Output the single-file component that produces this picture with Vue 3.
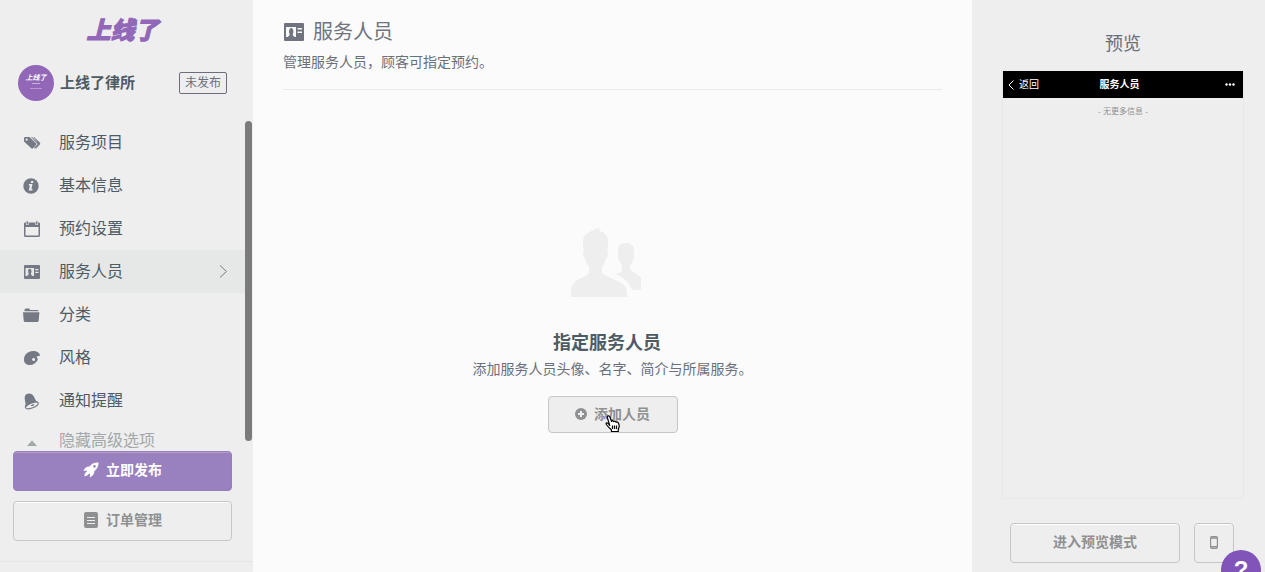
<script setup>
const items = [
  { label: '服务项目', icon: 'tags' },
  { label: '基本信息', icon: 'info' },
  { label: '预约设置', icon: 'calendar' },
  { label: '服务人员', icon: 'card', active: true },
  { label: '分类', icon: 'folder' },
  { label: '风格', icon: 'palette' },
  { label: '通知提醒', icon: 'bell' },
]
</script>

<template>
  <div class="app">
    <aside class="sidebar">
      <div class="logo">上线了</div>
      <div class="profile">
        <div class="avatar"><b>上线了</b><i></i><i class="wide"></i></div>
        <span class="name">上线了律所</span>
        <span class="status">未发布</span>
      </div>
      <div class="scroll">
        <nav class="menu">
          <a v-for="item in items" :key="item.label" href="#" class="item" :class="{ active: item.active }">
            <svg class="icon" width="18" height="18" viewBox="0 0 18 18" fill="currentColor" aria-hidden="true">
              <path v-if="item.icon === 'tags'" fill-rule="evenodd" d="M1 4.2Q1 3 2.2 3H6.5L13 9.3Q13.8 10.1 13 11L10 14.3Q9.2 15 8.3 14.2L1 7.5ZM3.6 4.5A1.1 1.1 0 1 0 3.7 6.7 1.1 1.1 0 0 0 3.6 4.5ZM8 3H9L15.7 9.2Q16.4 9.8 15.7 10.6L12 14.7 11 14.1 14.6 10ZM10.2 3H11.1L17 8.8Q17.6 9.6 16.9 10.4L13.4 14.6 12.8 14.2 16.3 9.9Z" />
              <template v-else-if="item.icon === 'info'">
                <circle cx="8" cy="9" r="7.7" />
                <path fill="#eee" d="M8.2 4.1h2.2l-.4 2H7.8zM6 7h3.5l-1.1 5h1.2l-.3 1.4H5.8l1.1-5H5.7z" />
              </template>
              <path v-else-if="item.icon === 'calendar'" fill-rule="evenodd" d="M1 3.5Q1 2.5 2 2.5H3V5H5.5V2.5H12.5V5H15V2.5H16Q17 2.5 17 3.5V15.5Q17 17 15.5 17H2.5Q1 17 1 15.5ZM2.5 7V15.5H15.5V7ZM3.6 1H4.9V4.4H3.6ZM13.1 1H14.4V4.4H13.1Z" />
              <template v-else-if="item.icon === 'card'">
                <rect x="1" y="2" width="16" height="14" rx="1" />
                <path fill="#e6e8e7" d="M2.5 5H11V13H9.5L8 11.5V10.5Q8.7 9 8.4 7.2 8 5.8 6.8 5.8T5.2 7.2Q4.9 9 5.6 10.5V11.5L4 13H2.5ZM12.2 6H15.5V7.2H12.2ZM12.2 8.7H15.5V10H12.2Z" />
              </template>
              <path v-else-if="item.icon === 'folder'" d="M1.5 4Q1.5 2.5 3 2.5H6.2L7.2 4H14.5Q15.5 4 15.5 5.3H1.5ZM0 6.2H16.4L15.7 14.5Q15.6 16 14.2 16H2.2Q.8 16 .7 14.5Z" />
              <path v-else-if="item.icon === 'palette'" fill-rule="evenodd" d="M1 11C.8 5.5 5 2 10 2c3.8 0 7 2 7 4.8-1.3.7-3 .1-3.4 1 .5 1.3 1.8 1.8.8 3.7C12.8 14.2 10 16 7 16c-3.6 0-5.8-1.8-6-5zM10.5 9a1.5 1.5 0 1 0 .1 3 1.5 1.5 0 0 0-.1-3z" />
              <template v-else>
                <path d="M2 4C3.5 1 8 .6 10.5 4c2 2.8 1.3 4.8 4.7 6.2-4 .1-9.5 1.8-12.8 5.2C3.5 11 .8 7.2 2 4z" />
                <ellipse cx="8.8" cy="13.2" rx="6.7" ry="2.7" transform="rotate(-21 8.8 13.2)" fill="none" stroke="currentColor" stroke-width="1.2" />
                <path d="M7.4 13.5q2.2-1.7 4-1.2-.4 2.8-4 1.2z" />
              </template>
            </svg>
            <span>{{ item.label }}</span>
            <svg v-if="item.active" class="arrow" width="9" height="14" viewBox="0 0 9 14" fill="none" stroke="currentColor" aria-hidden="true"><path d="M1 .5l6.5 6L1 12.5" /></svg>
          </a>
          <a href="#" class="item collapse">
            <svg class="icon" width="18" height="18" viewBox="0 0 18 18" fill="currentColor" aria-hidden="true"><path d="M4 14 9 8.5 14 14z" /></svg>
            <span>隐藏高级选项</span>
          </a>
        </nav>
        <div class="thumb"></div>
      </div>
      <div class="actions">
        <button class="btn primary">
          <svg width="16" height="16" viewBox="0 0 16 16" fill="currentColor" aria-hidden="true"><path fill-rule="evenodd" d="M15.5.5C11 .3 8.4 2 6.4 4.5 3.8 4.3 1.5 6 .4 9L3.3 8.5 4 9.4C2.3 10 1.6 12 1.3 14.3 3.8 14 5.4 13 6.2 11.5L7.1 12.2 6.8 15.4C9.7 14 11.6 12 11.3 9.3 14 7.2 15.7 4.5 15.5.5ZM11.5 3.1A1.3 1.3 0 1 1 11.4 5.7 1.3 1.3 0 0 1 11.5 3.1Z" /></svg>
          立即发布
        </button>
        <button class="btn">
          <svg width="16" height="16" viewBox="0 0 16 16" aria-hidden="true"><rect x="1" width="14" height="16" rx="2" fill="currentColor" /><path d="M4 5.5h8M4 8.5h8M4 11.5h8" stroke="#eee" /></svg>
          订单管理
        </button>
      </div>
    </aside>

    <main class="main">
      <header class="head">
        <h1>
          <svg width="20" height="18" viewBox="0 0 20 18" aria-hidden="true">
            <rect width="20" height="18" rx="1" fill="currentColor" />
            <path fill="#fbfbfb" d="M2 4H12V14H10.6L8.8 12.3V11Q9.7 9.5 9.3 7.4 8.7 5 7.2 5T5.1 7.4Q4.7 9.5 5.6 11V12.3L3.8 14H2ZM13.5 5H18V6.4H13.5ZM13.5 8.5H18V10H13.5Z" />
          </svg>
          服务人员
        </h1>
        <p>管理服务人员，顾客可指定预约。</p>
      </header>
      <section class="empty">
        <div class="intro">
          <svg width="72" height="72" viewBox="0 0 72 72" fill="#eee" aria-hidden="true">
            <path d="M0 70V63C0 58 4 54 8 52L16 48Q18 47 18 45V39C15 37 15 33 14 31Q12 30 12 26L13 23 12 20V14C12 8 17 6 21 3.500Q26 2 29 0L28 2Q29 5 32 5C36 8 37 11 37 15V20L36 23 37 26Q37 30 35 31C34 35 34 37 31 39V44Q31 47 34 48C40 52 47 53 52 57 55 60 56 63 56 67V70Z" />
            <path d="M44 47Q50 46 51 43V38C49 36 49 33 47 32V22C47 17 51 16 55 16S63 18 63 23V32C61 34 61 37 59 38V41C60 45 65 46 68 49L70 51V63H62L60 61C58 54 51 50 44 47Z" />
          </svg>
          <h2>指定服务人员</h2>
        </div>
        <p>添加服务人员头像、名字、简介与所属服务。</p>
        <button class="btn add">
          <svg width="12" height="12" viewBox="0 0 12 12" aria-hidden="true"><circle cx="6" cy="6" r="6" fill="currentColor" /><path d="M6 3v6M3 6h6" stroke="#eee" stroke-width="2" /></svg>
          添加人员
          <svg class="cursor" width="16" height="18" viewBox="0 0 16 18" fill="#fff" stroke="#000" stroke-width="1.2" stroke-linejoin="round" aria-hidden="true"><path d="M4.7 10.5 2.4 2.7Q2 1.2 3.2.9T4.9 2L6.6 6.5Q7 5.4 8 5.8L8.7 6.6Q9.6 5.7 10.6 6.5L11.2 7.3Q12 6.6 13 7.4 14.2 9 14.3 11.4L13.3 14V16.5H6.4V14.8Q4 13 1.4 9.5.6 8 1.8 7.8T4.7 10.5Z" /><path d="M7.5 10.5v3.5M9.5 10.5v3.5M11.5 10.5v3.5" /></svg>
        </button>
      </section>
    </main>

    <aside class="preview">
      <h2>预览</h2>
      <div class="phone">
        <div class="bar">
          <a href="#" class="back"><svg width="6" height="10" viewBox="0 0 6 10" fill="none" stroke="currentColor" aria-hidden="true"><path d="M5.5.5 1 5l4.500 4.500" /></svg>返回</a>
          <strong>服务人员</strong>
          <svg class="dots" width="10" height="3" viewBox="0 0 10 3" fill="#fff" aria-hidden="true"><circle cx="1.5" cy="1.5" r="1.2" /><circle cx="5" cy="1.5" r="1.2" /><circle cx="8.5" cy="1.5" r="1.2" /></svg>
        </div>
        <p>- 无更多信息 -</p>
      </div>
      <div class="modes">
        <button class="btn mode">进入预览模式</button>
        <button class="btn device" aria-label="手机预览">
          <svg width="8" height="13" viewBox="0 0 8 13" fill="none" stroke="currentColor" aria-hidden="true"><rect x=".6" y=".6" width="6.8" height="11.8" rx="1.2" stroke-width="1.2" /><path d="M1 2h6M1 10.8h6" stroke-width="1.4" /></svg>
        </button>
      </div>
    </aside>
    <button class="help">?</button>
  </div>
</template>

<style>
body {
  margin: 0;
  overflow: hidden;
}
</style>

<style scoped>
.app {
  display: flex;
  position: relative;
  height: 100vh;
  overflow: hidden;
  background: #eee;
  color: #6a6f7b;
  font-family: "Liberation Sans", "Noto Sans CJK SC", sans-serif;
  font-size: 14px;
  line-height: 20px;
}
* { box-sizing: border-box; }
a { color: inherit; text-decoration: none; }
h1, h2, p { margin: 0; }
svg { flex: none; }

.sidebar {
  display: flex;
  flex-direction: column;
  flex: none;
  width: 253px;
}
.logo {
  height: 65px;
  padding: 13px 8px 0 0;
  text-align: center;
  color: #9267b8;
  font-family: "Noto Sans CJK SC", sans-serif;
  font-size: 24px;
  line-height: 32px;
  font-weight: 900;
  font-style: italic;
  -webkit-text-stroke: 1px #9267b8;
}
.profile {
  display: flex;
  align-items: center;
  height: 36px;
  margin-bottom: 20px;
  padding: 0 26px 0 18px;
}
.avatar {
  display: flex;
  flex-direction: column;
  align-items: center;
  width: 36px;
  height: 36px;
  padding-top: 8px;
  border-radius: 50%;
  background: #9267b8;
  color: #fff;
}
.avatar b { font-size: 7px; line-height: 10px; font-style: italic; }
.avatar i { width: 8px; height: 1px; background: #c9b1da; }
.avatar .wide { width: 12px; margin-top: 4px; background: #b797ce; }
.name {
  margin-left: 6px;
  color: #4e5b64;
  font-size: 15px;
  font-weight: 700;
}
.status {
  margin-left: auto;
  padding: 0 5px;
  border: 1px solid #6a6f7b;
  border-radius: 2px;
  font-size: 12px;
}
.scroll {
  position: relative;
  flex: 1;
  min-height: 0;
  overflow: hidden;
}
.item {
  display: flex;
  align-items: center;
  height: 43px;
  margin-right: 8px;
  padding: 0 17px 0 23px;
  color: #4e5b64;
  font-size: 16px;
}
.item.active { background: #e6e8e7; }
.icon { margin-right: 18px; color: #747984; }
.arrow { margin-left: auto; color: #747984; }
.collapse { height: 37px; color: #a3a8ab; }
.collapse .icon { color: #a3a8ab; }
.thumb {
  position: absolute;
  top: 0;
  right: 1px;
  bottom: 10px;
  width: 7px;
  border-radius: 4px;
  background: #7b7b7b;
}
.actions {
  display: grid;
  gap: 10px;
  height: 111px;
  margin-bottom: 10px;
  padding: 0 21px 20px 13px;
  border-bottom: 1px solid #e5e5e5;
}
.btn {
  display: flex;
  align-items: center;
  justify-content: center;
  gap: 7px;
  height: 40px;
  padding: 0 0 4px;
  border: 1px solid #c6c6c6;
  border-radius: 4px;
  background: #eee;
  box-shadow: inset 0 1px #fff;
  color: #8e9091;
  font: 700 14px/20px "Noto Sans CJK SC", sans-serif;
}
.btn svg { margin-top: 2px; }
.primary {
  border-color: #967dbc;
  background: #9980be;
  box-shadow: inset 0 1px #b39dce;
  color: #fff;
}

.main {
  display: flex;
  flex-direction: column;
  flex: 1;
  min-width: 0;
  padding: 0 30px;
  background: #fbfbfb;
}
.head {
  height: 90px;
  padding-top: 18px;
  border-bottom: 1px solid #eaeaea;
}
.head h1 {
  display: flex;
  align-items: center;
  gap: 9px;
  margin-left: 1px;
  color: #6f747f;
  font-size: 20px;
  line-height: 28px;
  font-weight: 400;
}
.head p { margin-top: 6px; }
.empty {
  display: flex;
  flex-direction: column;
  flex: 1;
  align-items: center;
  justify-content: center;
  padding-bottom: 2px;
}
.intro {
  display: flex;
  flex-direction: column;
  align-items: center;
  padding-right: 11px;
}
.empty h2 {
  margin-top: 30px;
  color: #4e5b64;
  font-size: 18px;
  line-height: 28px;
  font-weight: 700;
}
.empty p { margin-top: 2px; }
.add {
  position: relative;
  width: 130px;
  height: 37px;
  margin-top: 17px;
  box-shadow: none;
}
.add .cursor { position: absolute; left: 56px; top: 18px; margin: 0; }

.preview {
  display: flex;
  flex-direction: column;
  flex: none;
  width: 293px;
  padding: 30px 21px 9px 30px;
}
.preview h2 {
  margin-bottom: 13px;
  text-align: center;
  font-size: 18px;
  line-height: 28px;
  font-weight: 400;
}
.phone {
  flex: 1;
  border: 1px solid #e8e8e8;
  border-top: 0;
  border-radius: 0 0 4px 4px;
}
.bar {
  display: grid;
  grid-template-columns: 1fr auto 1fr;
  align-items: center;
  height: 27px;
  padding: 0 8px 0 5px;
  background: #000;
  color: #fff;
  font-size: 10px;
}
.bar strong { padding-right: 4px; font-weight: 700; }
.back { display: flex; align-items: center; gap: 5px; }
.dots { justify-self: end; }
.phone p {
  margin-top: 4px;
  text-align: center;
  color: #8e9091;
  font-size: 8px;
}
.modes { display: flex; gap: 14px; margin-top: 24px; padding-left: 8px; }
.mode { width: 170px; }
.device { width: 40px; }
.help {
  position: absolute;
  right: 4px;
  bottom: -18px;
  width: 40px;
  height: 40px;
  padding: 0;
  border: 0;
  border-radius: 50%;
  background: #8054b8;
  color: #fff;
  font: 700 24px/40px "Liberation Sans", sans-serif;
}
</style>
